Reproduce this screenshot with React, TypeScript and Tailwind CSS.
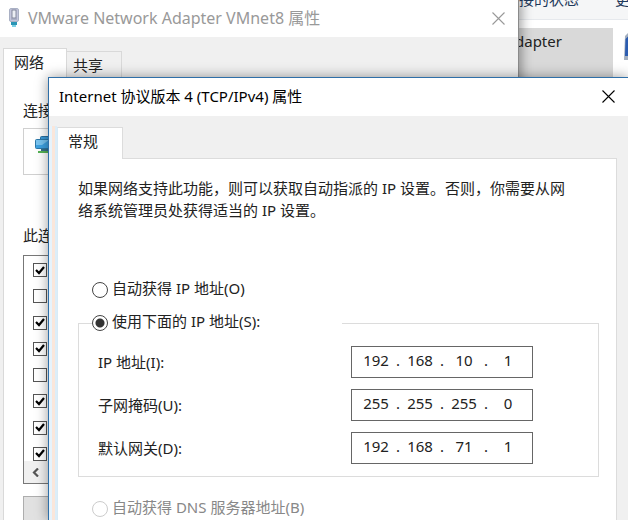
const components = [true, false, true, true, false, true, true, true];

const addressFields = [
  { id: "ip", label: "IP 地址(I):", parts: ["192", "168", "10", "1"] },
  { id: "mask", label: "子网掩码(U):", parts: ["255", "255", "255", "0"] },
  { id: "gateway", label: "默认网关(D):", parts: ["192", "168", "71", "1"] },
];

function CloseButton({ className }: { className: string }) {
  return (
    <button type="button" aria-label="关闭" className={className}>
      <svg width="13" height="13" viewBox="0 0 13 13" fill="none" stroke="currentColor" strokeWidth="1.1">
        <path d="M.5 .5l12 12M12.5 .5l-12 12" />
      </svg>
    </button>
  );
}

function AdapterIcon() {
  return (
    <svg width="12" height="20" viewBox="0 0 12 20" className="shrink-0">
      <rect x="1.5" y=".5" width="9" height="13" rx="1.5" fill="#c4c6dc" stroke="#a9b0c4" />
      <rect x="4" y="2" width="4" height="8" fill="#eceef4" stroke="#70758c" strokeWidth=".8" />
      <path d="M3 11h6" stroke="#9499b0" />
      <rect x="3" y="14" width="6" height="3" fill="#2a95b5" />
      <rect x="4" y="17" width="4" height="2" fill="#7fd0e4" />
    </svg>
  );
}

function ComputerIcon() {
  return (
    <svg width="24" height="20" viewBox="0 0 24 20">
      <rect x="5.5" y="1.5" width="18" height="9" rx="1" fill="#3b9ad8" stroke="#2a6f9f" />
      <rect x=".5" y="4.5" width="17" height="9" rx="1" fill="#3ea2e2" stroke="#2d78a8" />
      <path d="M1 5h13l-7 5H1z" fill="#79c4f0" />
      <path d="M6 14h7v2H6z" fill="#39708a" />
      <path d="M3 16h17v2H3z" fill="#55b355" />
    </svg>
  );
}

function Explorer() {
  return (
    <div className="absolute inset-0 bg-white">
      <div className="flex h-5 justify-between border-b border-[#e6e9ed] bg-[#f5f6f7] pl-[519px] text-[#1e395b]">
        <span className="-mt-3 whitespace-nowrap">接的状态</span>
        <span className="-mt-3 w-[13px] whitespace-nowrap">更</span>
      </div>
      <div className="mt-2 flex justify-between">
        <div className="mr-[11px] h-[60px] flex-1 bg-[#d9d9d9] pl-[515px] pt-px leading-6">dapter</div>
        <svg width="4" height="34" viewBox="0 0 4 34">
          <path d="M1 8l3-3v27H0z" fill="#a3afbf" />
          <path d="M1.5 11l3-3v20H1z" fill="#2b5cb0" />
        </svg>
      </div>
    </div>
  );
}

function AdapterWindow() {
  return (
    <section className="absolute inset-y-0 left-0 isolate w-[519px] border-r border-[#8a8a8a] bg-[#f0f0f0] shadow-[3px_0_10px_rgba(0,0,0,0.35)]">
      <header className="flex h-[37px] items-center bg-white pb-px pl-2 pr-[13px] text-[#999]">
        <AdapterIcon />
        <h2 className="ml-2 flex-1 text-base">VMware Network Adapter VMnet8 属性</h2>
        <CloseButton className="text-[#999]" />
      </header>
      <div className="flex items-end pl-[3px] pt-[11px]">
        <button type="button" className="relative z-10 -mb-px h-8 w-16 border border-b-0 border-[#d9d9d9] bg-white pb-1 pl-2.5 text-left">网络</button>
        <button type="button" className="h-7 w-[55px] border border-l-0 border-b-0 border-[#d9d9d9] pl-1.5 text-left">共享</button>
      </div>
      <div className="ml-[3px] mr-3 h-full border border-[#d9d9d9] bg-white pl-[19px]">
        <p className="mt-[18px] leading-6">连接</p>
        <div className="mt-1.5 h-[47px] border border-[#d0d0d0] pl-[11px] pt-1.5">
          <ComputerIcon />
        </div>
        <p className="mt-12 leading-6">此连</p>
        <div className="mt-2 h-[229px] border border-[#777]">
          <ul className="flex h-[205px] flex-col justify-between pt-[7px]">
            {components.map((on, i) => (
              <li key={i} className="flex h-3.5 items-center pl-[9px]">
                <input type="checkbox" defaultChecked={on} aria-label={`项目 ${i + 1}`} className="peer size-3.5 appearance-none border border-[#555] bg-white" />
                <svg width="10" height="9" viewBox="0 0 10 9" className="-ml-3 hidden peer-checked:block" fill="none" stroke="#000" strokeWidth="2.2">
                  <path d="M1 4l3 3 5-6" />
                </svg>
              </li>
            ))}
          </ul>
          <div className="flex h-[22px] items-center bg-[#f0f0f0] pl-2">
            <svg width="8" height="9" viewBox="0 0 8 9" fill="none" stroke="#555" strokeWidth="2.2">
              <path d="M6 .5l-4 4 4 4" />
            </svg>
          </div>
        </div>
        <button type="button" aria-label="安装" className="mt-3 h-8 w-28 border border-[#adadad] bg-[#e1e1e1]" />
      </div>
    </section>
  );
}

function Radio({ label, checked, disabled }: { label: string; checked?: boolean; disabled?: boolean }) {
  return (
    <label className="flex items-center gap-1 leading-6">
      <input
        type="radio"
        name={disabled ? "dns" : "ip"}
        defaultChecked={checked}
        disabled={disabled}
        className="size-4 shrink-0 appearance-none rounded-full border border-[#444] bg-white checked:bg-[radial-gradient(circle,#333_4px,transparent_5px)] disabled:border-[#ccc]"
      />
      <span className={disabled ? "-mt-1 text-[#888]" : "-mt-1"}>{label}</span>
    </label>
  );
}

function ProtocolWindow() {
  return (
    <section className="absolute bottom-0 left-12 right-0 top-[77px] isolate overflow-hidden border-l border-t border-[#2f6fa8] bg-[#f0f0f0] shadow-[0_0_12px_rgba(0,0,0,0.4)]">
      <header className="flex h-[38px] items-center bg-white pb-0.5 pl-2.5 pr-[13px] text-black">
        <h1 className="flex-1">Internet 协议版本 4 (TCP/IPv4) 属性</h1>
        <CloseButton className="text-black" />
      </header>
      <div className="flex h-full">
        <div className="mt-2.5 w-2 shrink-0 bg-[linear-gradient(to_right,#e6f3fc_3px,#fae6da_3px,#fae6da_6px,#dcedf8_6px)]" />
        <div className="mr-[11px] flex-1 pt-[11px]">
          <button type="button" className="relative z-10 -mb-px block h-8 w-[66px] border border-b-0 border-[#dcdcdc] border-l-[#d9ebf6] bg-white pb-1 pl-2.5 text-left">常规</button>
          <div className="h-full border border-[#dcdcdc] border-l-[#d9ebf6] bg-white pl-5 pr-[17px] pt-[18px]">
            <p className="mr-7 leading-[22px]">
              如果网络支持此功能，则可以获取自动指派的 IP 设置。否则，你需要从网络系统管理员处获得适当的 IP 设置。
            </p>
            <div className="mt-[59px] pl-3.5">
              <Radio label="自动获得 IP 地址(O)" />
            </div>
            <fieldset className="mt-[13px] border border-[#dcdcdc] pb-3 pl-[19px]">
              <legend className="-ml-1.5 w-[250px]">
                <Radio label="使用下面的 IP 地址(S):" checked />
              </legend>
              <div className="mt-[13px] flex flex-col gap-[11px]">
                {addressFields.map(field => (
                  <div key={field.id} className="flex items-center">
                    <label htmlFor={field.id} className="w-[253px]">{field.label}</label>
                    <div className="flex h-8 w-[182px] items-center border border-[#666] pb-1 pl-1.5">
                      {field.parts.map((part, i) => (
                        <div key={i} className="flex items-center">
                          {i > 0 && <span className="w-2 text-center">.</span>}
                          <input id={i === 0 ? field.id : undefined} aria-label={field.label} defaultValue={part} className="w-9 text-center" />
                        </div>
                      ))}
                    </div>
                  </div>
                ))}
              </div>
            </fieldset>
            <div className="mt-[22px] pl-3.5">
              <Radio label="自动获得 DNS 服务器地址(B)" disabled />
            </div>
          </div>
        </div>
      </div>
    </section>
  );
}

export default function App() {
  return (
    <main className="relative h-screen overflow-hidden font-['Noto_Sans','Noto_Sans_CJK_SC',sans-serif] text-[15px] text-[#222]">
      <Explorer />
      <AdapterWindow />
      <ProtocolWindow />
    </main>
  );
}
